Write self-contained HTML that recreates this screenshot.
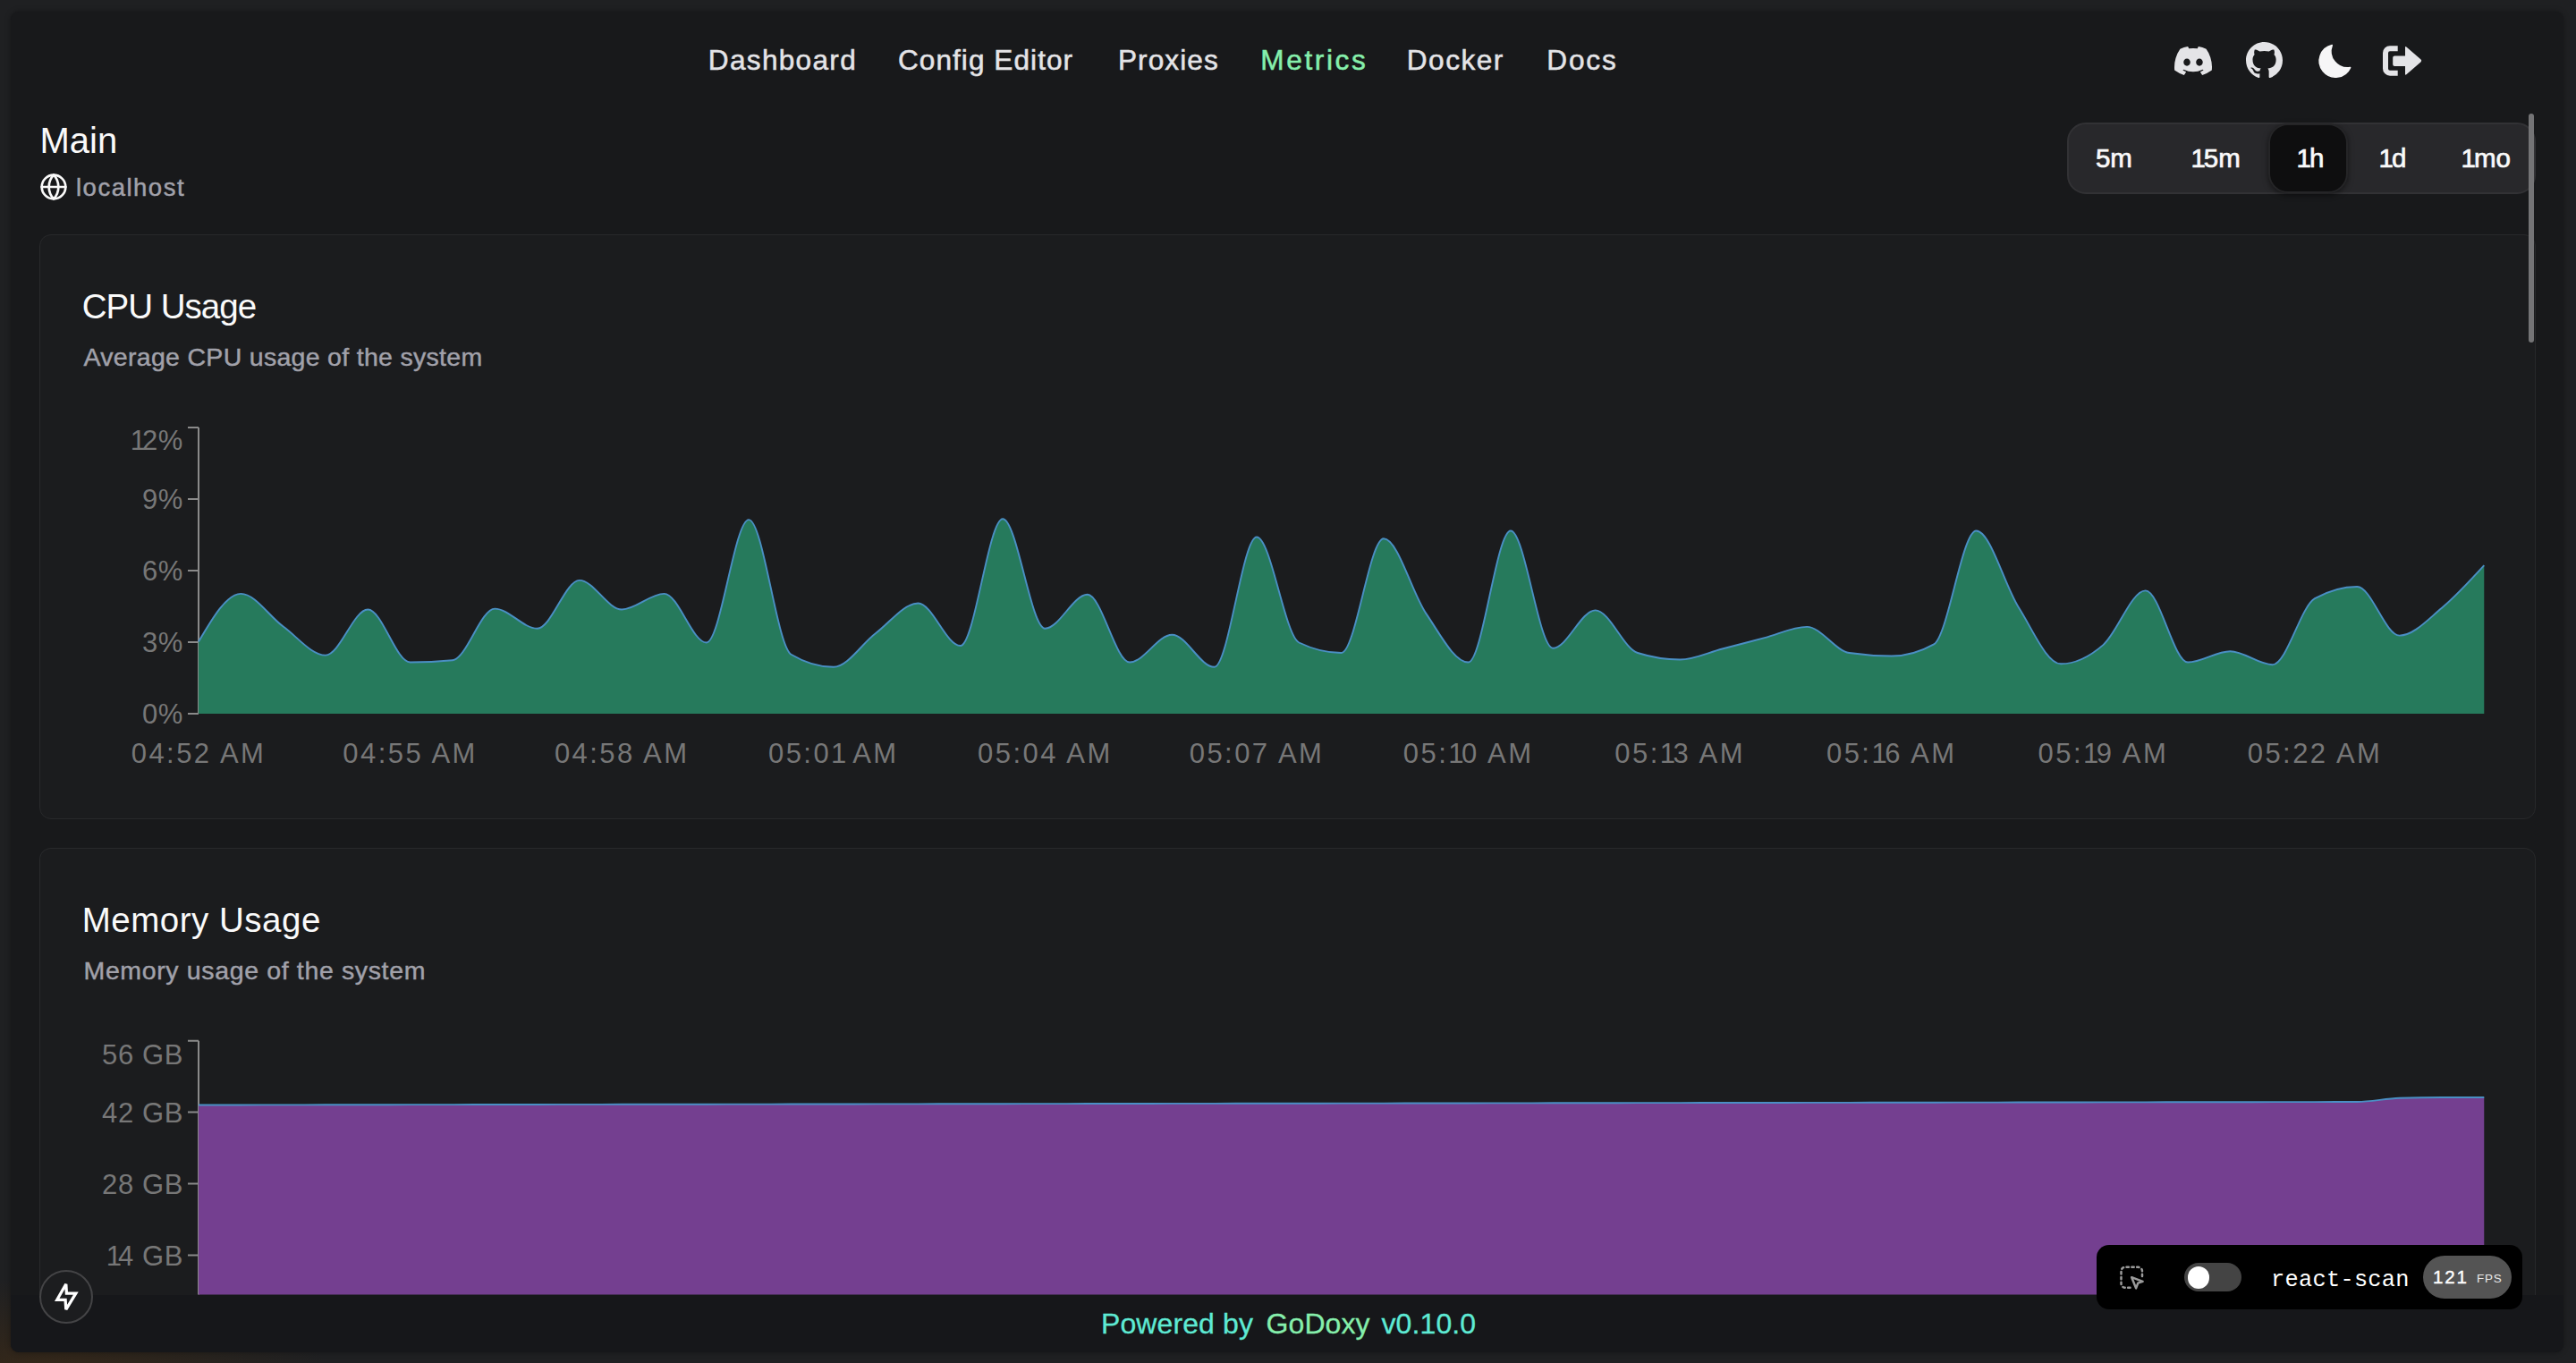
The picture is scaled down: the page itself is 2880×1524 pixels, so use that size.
<!DOCTYPE html>
<html><head><meta charset="utf-8">
<style>
*{box-sizing:border-box;margin:0;padding:0}
html,body{width:2880px;height:1524px;overflow:hidden;background:#1f2022;font-family:"Liberation Sans",sans-serif}
.wall{position:absolute;left:0;top:0;width:2880px;height:1524px;background:
 radial-gradient(ellipse 330px 110px at 40px 1540px, rgba(60,42,22,0.8), rgba(60,42,22,0) 100%),
 #1f2022}
.win{position:absolute;left:12px;top:13px;width:2854px;height:1499px;background:#18191b;border-radius:9px;box-shadow:0 0 6px rgba(0,0,0,0.35)}
.t{position:absolute;line-height:1;white-space:nowrap}
.card{position:absolute;left:44px;width:2791px;background:#1b1c1e;border:1px solid #28292b;border-radius:13px}
.yl{position:absolute;left:0;width:205px;text-align:right;font-size:31px;line-height:1;color:#777777;white-space:nowrap;letter-spacing:0.6px}
.xl{position:absolute;width:300px;text-align:center;font-size:31px;line-height:1;color:#777777;white-space:nowrap;letter-spacing:2.45px}
.chart{position:absolute;left:0;top:0}
.seg{position:absolute;left:2311px;top:137px;width:524px;height:80px;background:#28282b;border:2px solid #323235;border-radius:21px}
.segact{position:absolute;left:2536px;top:138px;width:89px;height:78px;background:#0e0e0f;border:2px solid #252527;border-radius:22px;box-shadow:0 2px 6px rgba(0,0,0,0.5)}
.sb{position:absolute;left:2827px;top:127px;width:6px;height:256px;background:#747476;border-radius:3px}
.foot{position:absolute;left:12px;top:1447.5px;width:2854px;height:64.5px;background:#16171a;border-radius:0 0 9px 9px}
.rs{position:absolute;left:2344px;top:1392px;width:476px;height:72px;background:#000;border-radius:14px}
.bolt{position:absolute;left:44px;top:1420px;width:60px;height:60px;border-radius:50%;border:2px solid #444446;background:#1c1d1f}
</style></head><body>
<div class="wall"></div>
<div class="win"></div>
<div class="card" style="top:262px;height:654px"></div>
<div class="card" style="top:948px;height:520px;border-bottom:none;border-radius:13px 13px 0 0"></div>
<svg class="chart" width="2880" height="1524" viewBox="0 0 2880 1524">
<defs><clipPath id="clipm"><rect x="0" y="0" width="2880" height="1447.5"/></clipPath></defs>
<g stroke="#8a8a8a" stroke-width="2" fill="none">
<path d="M222,478 V798"/>
<path d="M210,478 H222 M210,558 H222 M210,638 H222 M210,718 H222 M210,798 H222"/>
</g>
<path d="M222.00,717.60 C237.77,690.75 253.55,663.90 269.32,663.90 C285.09,663.90 300.87,689.05 316.64,700.50 C332.41,711.95 348.19,732.60 363.96,732.60 C379.73,732.60 395.51,681.50 411.28,681.50 C427.05,681.50 442.83,740.50 458.60,740.50 C474.37,740.50 490.15,739.73 505.92,738.20 C521.69,736.67 537.47,680.60 553.24,680.60 C569.01,680.60 584.79,702.70 600.56,702.70 C616.33,702.70 632.11,648.90 647.88,648.90 C663.65,648.90 679.43,681.50 695.20,681.50 C710.97,681.50 726.75,663.90 742.52,663.90 C758.29,663.90 774.07,718.50 789.84,718.50 C805.61,718.50 821.39,581.10 837.16,581.10 C852.93,581.10 868.71,722.30 884.48,731.70 C900.25,741.10 916.03,745.80 931.80,745.80 C947.57,745.80 963.35,719.88 979.12,708.00 C994.89,696.12 1010.67,674.50 1026.44,674.50 C1042.21,674.50 1057.99,722.00 1073.76,722.00 C1089.53,722.00 1105.31,580.30 1121.08,580.30 C1136.85,580.30 1152.63,702.70 1168.40,702.70 C1184.17,702.70 1199.95,664.80 1215.72,664.80 C1231.49,664.80 1247.27,740.50 1263.04,740.50 C1278.81,740.50 1294.59,709.70 1310.36,709.70 C1326.13,709.70 1341.91,745.80 1357.68,745.80 C1373.45,745.80 1389.23,600.50 1405.00,600.50 C1420.77,600.50 1436.55,710.83 1452.32,718.50 C1468.09,726.17 1483.87,730.00 1499.64,730.00 C1515.41,730.00 1531.19,602.30 1546.96,602.30 C1562.73,602.30 1578.51,662.87 1594.28,685.90 C1610.05,708.93 1625.83,740.50 1641.60,740.50 C1657.37,740.50 1673.15,593.50 1688.92,593.50 C1704.69,593.50 1720.47,724.70 1736.24,724.70 C1752.01,724.70 1767.79,682.40 1783.56,682.40 C1799.33,682.40 1815.11,725.00 1830.88,730.00 C1846.65,735.00 1862.43,737.50 1878.20,737.50 C1893.97,737.50 1909.75,729.55 1925.52,725.50 C1941.29,721.45 1957.07,717.30 1972.84,713.20 C1988.61,709.10 2004.39,700.90 2020.16,700.90 C2035.93,700.90 2051.71,727.67 2067.48,730.00 C2083.25,732.33 2099.03,733.50 2114.80,733.50 C2130.57,733.50 2146.35,729.10 2162.12,720.30 C2177.89,711.50 2193.67,593.50 2209.44,593.50 C2225.21,593.50 2240.99,654.20 2256.76,679.00 C2272.53,703.80 2288.31,742.30 2304.08,742.30 C2319.85,742.30 2335.63,734.75 2351.40,721.10 C2367.17,707.45 2382.95,660.40 2398.72,660.40 C2414.49,660.40 2430.27,740.50 2446.04,740.50 C2461.81,740.50 2477.59,728.20 2493.36,728.20 C2509.13,728.20 2524.91,743.20 2540.68,743.20 C2556.45,743.20 2572.23,678.00 2588.00,669.20 C2603.77,660.40 2619.55,656.00 2635.32,656.00 C2651.09,656.00 2666.87,710.60 2682.64,710.60 C2698.41,710.60 2714.19,692.87 2729.96,679.80 C2745.73,666.73 2761.51,649.47 2777.28,632.20 L2777.28,798.00 L222.00,798.00 Z" fill="#267a5c"/>
<path d="M222.00,717.60 C237.77,690.75 253.55,663.90 269.32,663.90 C285.09,663.90 300.87,689.05 316.64,700.50 C332.41,711.95 348.19,732.60 363.96,732.60 C379.73,732.60 395.51,681.50 411.28,681.50 C427.05,681.50 442.83,740.50 458.60,740.50 C474.37,740.50 490.15,739.73 505.92,738.20 C521.69,736.67 537.47,680.60 553.24,680.60 C569.01,680.60 584.79,702.70 600.56,702.70 C616.33,702.70 632.11,648.90 647.88,648.90 C663.65,648.90 679.43,681.50 695.20,681.50 C710.97,681.50 726.75,663.90 742.52,663.90 C758.29,663.90 774.07,718.50 789.84,718.50 C805.61,718.50 821.39,581.10 837.16,581.10 C852.93,581.10 868.71,722.30 884.48,731.70 C900.25,741.10 916.03,745.80 931.80,745.80 C947.57,745.80 963.35,719.88 979.12,708.00 C994.89,696.12 1010.67,674.50 1026.44,674.50 C1042.21,674.50 1057.99,722.00 1073.76,722.00 C1089.53,722.00 1105.31,580.30 1121.08,580.30 C1136.85,580.30 1152.63,702.70 1168.40,702.70 C1184.17,702.70 1199.95,664.80 1215.72,664.80 C1231.49,664.80 1247.27,740.50 1263.04,740.50 C1278.81,740.50 1294.59,709.70 1310.36,709.70 C1326.13,709.70 1341.91,745.80 1357.68,745.80 C1373.45,745.80 1389.23,600.50 1405.00,600.50 C1420.77,600.50 1436.55,710.83 1452.32,718.50 C1468.09,726.17 1483.87,730.00 1499.64,730.00 C1515.41,730.00 1531.19,602.30 1546.96,602.30 C1562.73,602.30 1578.51,662.87 1594.28,685.90 C1610.05,708.93 1625.83,740.50 1641.60,740.50 C1657.37,740.50 1673.15,593.50 1688.92,593.50 C1704.69,593.50 1720.47,724.70 1736.24,724.70 C1752.01,724.70 1767.79,682.40 1783.56,682.40 C1799.33,682.40 1815.11,725.00 1830.88,730.00 C1846.65,735.00 1862.43,737.50 1878.20,737.50 C1893.97,737.50 1909.75,729.55 1925.52,725.50 C1941.29,721.45 1957.07,717.30 1972.84,713.20 C1988.61,709.10 2004.39,700.90 2020.16,700.90 C2035.93,700.90 2051.71,727.67 2067.48,730.00 C2083.25,732.33 2099.03,733.50 2114.80,733.50 C2130.57,733.50 2146.35,729.10 2162.12,720.30 C2177.89,711.50 2193.67,593.50 2209.44,593.50 C2225.21,593.50 2240.99,654.20 2256.76,679.00 C2272.53,703.80 2288.31,742.30 2304.08,742.30 C2319.85,742.30 2335.63,734.75 2351.40,721.10 C2367.17,707.45 2382.95,660.40 2398.72,660.40 C2414.49,660.40 2430.27,740.50 2446.04,740.50 C2461.81,740.50 2477.59,728.20 2493.36,728.20 C2509.13,728.20 2524.91,743.20 2540.68,743.20 C2556.45,743.20 2572.23,678.00 2588.00,669.20 C2603.77,660.40 2619.55,656.00 2635.32,656.00 C2651.09,656.00 2666.87,710.60 2682.64,710.60 C2698.41,710.60 2714.19,692.87 2729.96,679.80 C2745.73,666.73 2761.51,649.47 2777.28,632.20" fill="none" stroke="#4a8fc4" stroke-width="1.9"/>
<g clip-path="url(#clipm)">
<g stroke="#8a8a8a" stroke-width="2" fill="none">
<path d="M222,1163.7 V1484"/>
<path d="M210,1163.7 H222 M210,1243.5 H222 M210,1323.5 H222 M210,1403.5 H222"/>
</g>
<path d="M222.00,1235.50 C237.77,1235.48 253.55,1235.45 269.32,1235.43 C285.09,1235.41 300.87,1235.39 316.64,1235.36 C332.41,1235.34 348.19,1235.32 363.96,1235.29 C379.73,1235.27 395.51,1235.25 411.28,1235.23 C427.05,1235.20 442.83,1235.18 458.60,1235.16 C474.37,1235.13 490.15,1235.11 505.92,1235.09 C521.69,1235.07 537.47,1235.04 553.24,1235.02 C569.01,1235.00 584.79,1234.97 600.56,1234.95 C616.33,1234.93 632.11,1234.91 647.88,1234.88 C663.65,1234.86 679.43,1234.84 695.20,1234.82 C710.97,1234.79 726.75,1234.77 742.52,1234.75 C758.29,1234.72 774.07,1234.70 789.84,1234.68 C805.61,1234.66 821.39,1234.63 837.16,1234.61 C852.93,1234.59 868.71,1234.56 884.48,1234.54 C900.25,1234.52 916.03,1234.50 931.80,1234.47 C947.57,1234.45 963.35,1234.43 979.12,1234.40 C994.89,1234.38 1010.67,1234.36 1026.44,1234.34 C1042.21,1234.31 1057.99,1234.29 1073.76,1234.27 C1089.53,1234.24 1105.31,1234.22 1121.08,1234.20 C1136.85,1234.18 1152.63,1234.15 1168.40,1234.13 C1184.17,1234.11 1199.95,1234.08 1215.72,1234.06 C1231.49,1234.04 1247.27,1234.02 1263.04,1233.99 C1278.81,1233.97 1294.59,1233.95 1310.36,1233.92 C1326.13,1233.90 1341.91,1233.88 1357.68,1233.86 C1373.45,1233.83 1389.23,1233.81 1405.00,1233.79 C1420.77,1233.76 1436.55,1233.74 1452.32,1233.72 C1468.09,1233.70 1483.87,1233.67 1499.64,1233.65 C1515.41,1233.63 1531.19,1233.60 1546.96,1233.58 C1562.73,1233.56 1578.51,1233.54 1594.28,1233.51 C1610.05,1233.49 1625.83,1233.47 1641.60,1233.45 C1657.37,1233.42 1673.15,1233.40 1688.92,1233.38 C1704.69,1233.35 1720.47,1233.33 1736.24,1233.31 C1752.01,1233.29 1767.79,1233.26 1783.56,1233.24 C1799.33,1233.22 1815.11,1233.19 1830.88,1233.17 C1846.65,1233.15 1862.43,1233.13 1878.20,1233.10 C1893.97,1233.08 1909.75,1233.06 1925.52,1233.03 C1941.29,1233.01 1957.07,1232.99 1972.84,1232.97 C1988.61,1232.94 2004.39,1232.92 2020.16,1232.90 C2035.93,1232.87 2051.71,1232.85 2067.48,1232.83 C2083.25,1232.81 2099.03,1232.78 2114.80,1232.76 C2130.57,1232.74 2146.35,1232.71 2162.12,1232.69 C2177.89,1232.67 2193.67,1232.65 2209.44,1232.62 C2225.21,1232.60 2240.99,1232.58 2256.76,1232.55 C2272.53,1232.53 2288.31,1232.51 2304.08,1232.49 C2319.85,1232.46 2335.63,1232.44 2351.40,1232.42 C2367.17,1232.39 2382.95,1232.37 2398.72,1232.35 C2414.49,1232.33 2430.27,1232.30 2446.04,1232.28 C2461.81,1232.26 2477.59,1232.24 2493.36,1232.21 C2509.13,1232.19 2524.91,1232.17 2540.68,1232.14 C2556.45,1232.12 2572.23,1232.10 2588.00,1232.08 C2603.77,1232.05 2619.55,1232.05 2635.32,1232.01 C2651.09,1231.96 2666.87,1228.23 2682.64,1227.74 C2698.41,1227.25 2714.19,1227.00 2729.96,1227.00 C2745.73,1227.00 2761.51,1227.00 2777.28,1227.00 L2777.28,1484.00 L222.00,1484.00 Z" fill="#743f90"/>
<path d="M222.00,1235.50 C237.77,1235.48 253.55,1235.45 269.32,1235.43 C285.09,1235.41 300.87,1235.39 316.64,1235.36 C332.41,1235.34 348.19,1235.32 363.96,1235.29 C379.73,1235.27 395.51,1235.25 411.28,1235.23 C427.05,1235.20 442.83,1235.18 458.60,1235.16 C474.37,1235.13 490.15,1235.11 505.92,1235.09 C521.69,1235.07 537.47,1235.04 553.24,1235.02 C569.01,1235.00 584.79,1234.97 600.56,1234.95 C616.33,1234.93 632.11,1234.91 647.88,1234.88 C663.65,1234.86 679.43,1234.84 695.20,1234.82 C710.97,1234.79 726.75,1234.77 742.52,1234.75 C758.29,1234.72 774.07,1234.70 789.84,1234.68 C805.61,1234.66 821.39,1234.63 837.16,1234.61 C852.93,1234.59 868.71,1234.56 884.48,1234.54 C900.25,1234.52 916.03,1234.50 931.80,1234.47 C947.57,1234.45 963.35,1234.43 979.12,1234.40 C994.89,1234.38 1010.67,1234.36 1026.44,1234.34 C1042.21,1234.31 1057.99,1234.29 1073.76,1234.27 C1089.53,1234.24 1105.31,1234.22 1121.08,1234.20 C1136.85,1234.18 1152.63,1234.15 1168.40,1234.13 C1184.17,1234.11 1199.95,1234.08 1215.72,1234.06 C1231.49,1234.04 1247.27,1234.02 1263.04,1233.99 C1278.81,1233.97 1294.59,1233.95 1310.36,1233.92 C1326.13,1233.90 1341.91,1233.88 1357.68,1233.86 C1373.45,1233.83 1389.23,1233.81 1405.00,1233.79 C1420.77,1233.76 1436.55,1233.74 1452.32,1233.72 C1468.09,1233.70 1483.87,1233.67 1499.64,1233.65 C1515.41,1233.63 1531.19,1233.60 1546.96,1233.58 C1562.73,1233.56 1578.51,1233.54 1594.28,1233.51 C1610.05,1233.49 1625.83,1233.47 1641.60,1233.45 C1657.37,1233.42 1673.15,1233.40 1688.92,1233.38 C1704.69,1233.35 1720.47,1233.33 1736.24,1233.31 C1752.01,1233.29 1767.79,1233.26 1783.56,1233.24 C1799.33,1233.22 1815.11,1233.19 1830.88,1233.17 C1846.65,1233.15 1862.43,1233.13 1878.20,1233.10 C1893.97,1233.08 1909.75,1233.06 1925.52,1233.03 C1941.29,1233.01 1957.07,1232.99 1972.84,1232.97 C1988.61,1232.94 2004.39,1232.92 2020.16,1232.90 C2035.93,1232.87 2051.71,1232.85 2067.48,1232.83 C2083.25,1232.81 2099.03,1232.78 2114.80,1232.76 C2130.57,1232.74 2146.35,1232.71 2162.12,1232.69 C2177.89,1232.67 2193.67,1232.65 2209.44,1232.62 C2225.21,1232.60 2240.99,1232.58 2256.76,1232.55 C2272.53,1232.53 2288.31,1232.51 2304.08,1232.49 C2319.85,1232.46 2335.63,1232.44 2351.40,1232.42 C2367.17,1232.39 2382.95,1232.37 2398.72,1232.35 C2414.49,1232.33 2430.27,1232.30 2446.04,1232.28 C2461.81,1232.26 2477.59,1232.24 2493.36,1232.21 C2509.13,1232.19 2524.91,1232.17 2540.68,1232.14 C2556.45,1232.12 2572.23,1232.10 2588.00,1232.08 C2603.77,1232.05 2619.55,1232.05 2635.32,1232.01 C2651.09,1231.96 2666.87,1228.23 2682.64,1227.74 C2698.41,1227.25 2714.19,1227.00 2729.96,1227.00 C2745.73,1227.00 2761.51,1227.00 2777.28,1227.00" fill="none" stroke="#4a8fc4" stroke-width="1.9"/>
</g>
</svg>
<div class="foot"></div>
<div class="t" style="left:791.8px;top:52.4px;font-size:31.60px;color:#e4e4e7;letter-spacing:1.30px;-webkit-text-stroke:0.5px #e4e4e7;">Dashboard</div>
<div class="t" style="left:1003.9px;top:52.4px;font-size:31.60px;color:#e4e4e7;letter-spacing:1.05px;-webkit-text-stroke:0.5px #e4e4e7;">Config Editor</div>
<div class="t" style="left:1249.9px;top:52.4px;font-size:31.60px;color:#e4e4e7;letter-spacing:1.10px;-webkit-text-stroke:0.5px #e4e4e7;">Proxies</div>
<div class="t" style="left:1409.3px;top:52.4px;font-size:31.60px;color:#86efac;letter-spacing:2.60px;-webkit-text-stroke:0.5px #86efac;">Metrics</div>
<div class="t" style="left:1572.8px;top:52.4px;font-size:31.60px;color:#e4e4e7;letter-spacing:1.50px;-webkit-text-stroke:0.5px #e4e4e7;">Docker</div>
<div class="t" style="left:1729.3px;top:52.4px;font-size:31.60px;color:#e4e4e7;letter-spacing:1.80px;-webkit-text-stroke:0.5px #e4e4e7;">Docs</div>
<div class="t" style="left:44.5px;top:136.9px;font-size:40.00px;color:#fafafa;">Main</div>
<div class="t" style="left:85.0px;top:195.5px;font-size:27.50px;color:#a1a1aa;letter-spacing:1.5px;-webkit-text-stroke:0.5px #a1a1aa;">localhost</div>
<div class="t" style="left:91.8px;top:323.9px;font-size:38.50px;color:#fafafa;letter-spacing:-1.0px;">CPU Usage</div>
<div class="t" style="left:93.5px;top:384.6px;font-size:28.50px;color:#a1a1aa;letter-spacing:0.3px;-webkit-text-stroke:0.45px #a1a1aa;">Average CPU usage of the system</div>
<div class="t" style="left:91.8px;top:1009.8px;font-size:38.50px;color:#fafafa;letter-spacing:0.5px;">Memory Usage</div>
<div class="t" style="left:93.5px;top:1070.5px;font-size:28.50px;color:#a1a1aa;letter-spacing:0.64px;-webkit-text-stroke:0.45px #a1a1aa;">Memory usage of the system</div>
<div class="yl" style="top:476.8px"><span style="letter-spacing:-4px">1</span>2%</div><div class="yl" style="top:543.2px">9%</div><div class="yl" style="top:623.2px">6%</div><div class="yl" style="top:703.2px">3%</div><div class="yl" style="top:783.2px">0%</div><div class="yl" style="top:1163.6px">56 GB</div><div class="yl" style="top:1228.5px">42 GB</div><div class="yl" style="top:1308.5px">28 GB</div><div class="yl" style="top:1388.5px"><span style="letter-spacing:-4px">1</span>4 GB</div>
<div class="xl" style="left:72.0px;top:826.6px">04:52 AM</div><div class="xl" style="left:308.6px;top:826.6px">04:55 AM</div><div class="xl" style="left:545.2px;top:826.6px">04:58 AM</div><div class="xl" style="left:781.8px;top:826.6px">05:0<span style="letter-spacing:-2.5px">1</span> AM</div><div class="xl" style="left:1018.4px;top:826.6px">05:04 AM</div><div class="xl" style="left:1255.0px;top:826.6px">05:07 AM</div><div class="xl" style="left:1491.6px;top:826.6px">05:<span style="letter-spacing:-2.5px">1</span>0 AM</div><div class="xl" style="left:1728.2px;top:826.6px">05:<span style="letter-spacing:-2.5px">1</span>3 AM</div><div class="xl" style="left:1964.8px;top:826.6px">05:<span style="letter-spacing:-2.5px">1</span>6 AM</div><div class="xl" style="left:2201.4px;top:826.6px">05:<span style="letter-spacing:-2.5px">1</span>9 AM</div><div class="xl" style="left:2438.0px;top:826.6px">05:22 AM</div>
<div class="t" style="left:1231.0px;top:1463.5px;font-size:32.00px;color:#5eead4;letter-spacing:0.1px;-webkit-text-stroke:0.3px #5eead4;">Powered by</div>
<div class="t" style="left:1415.5px;top:1463.5px;font-size:32.00px;color:#86efac;letter-spacing:0.1px;-webkit-text-stroke:0.3px #86efac;">GoDoxy</div>
<div class="t" style="left:1544.5px;top:1463.5px;font-size:32.00px;color:#5eead4;letter-spacing:0.1px;-webkit-text-stroke:0.3px #5eead4;">v0.10.0</div>
<div class="seg"></div><div class="segact"></div><div class="t" style="left:2342.9px;top:162.3px;font-size:29.50px;color:#fafafa;-webkit-text-stroke:0.7px #fafafa;letter-spacing:0px;">5m</div><div class="t" style="left:2449.4px;top:162.3px;font-size:29.50px;color:#fafafa;-webkit-text-stroke:0.7px #fafafa;letter-spacing:0px;"><span style="letter-spacing:-2px">1</span>5m</div><div class="t" style="left:2567.5px;top:162.3px;font-size:29.50px;color:#fafafa;-webkit-text-stroke:0.7px #fafafa;letter-spacing:0px;"><span style="letter-spacing:-2px">1</span>h</div><div class="t" style="left:2659.5px;top:162.3px;font-size:29.50px;color:#fafafa;-webkit-text-stroke:0.7px #fafafa;letter-spacing:0px;"><span style="letter-spacing:-2px">1</span>d</div><div class="t" style="left:2751.5px;top:162.3px;font-size:29.50px;color:#fafafa;-webkit-text-stroke:0.7px #fafafa;letter-spacing:0px;"><span style="letter-spacing:-2px">1</span>mo</div>
<div class="sb"></div>
<!-- globe -->
<svg style="position:absolute;left:44px;top:193px" width="32" height="32" viewBox="0 0 24 24" fill="none" stroke="#fafafa" stroke-width="2" stroke-linecap="round" stroke-linejoin="round"><circle cx="12" cy="12" r="10"/><path d="M12 2a14.5 14.5 0 0 0 0 20 14.5 14.5 0 0 0 0-20"/><path d="M2 12h20"/></svg>
<!-- discord -->
<svg style="position:absolute;left:2431px;top:52px" width="42" height="32" viewBox="0 0 127.14 96.36"><path fill="#e4e4e7" d="M107.7,8.07A105.15,105.15,0,0,0,81.47,0a72.06,72.06,0,0,0-3.36,6.83A97.68,97.68,0,0,0,49,6.83,72.37,72.37,0,0,0,45.64,0,105.89,105.89,0,0,0,19.39,8.09C2.79,32.65-1.71,56.6.54,80.21h0A105.73,105.73,0,0,0,32.71,96.36,77.7,77.7,0,0,0,39.6,85.25a68.42,68.42,0,0,1-10.85-5.18c.91-.66,1.8-1.34,2.66-2a75.57,75.57,0,0,0,64.32,0c.87.71,1.76,1.39,2.66,2a68.68,68.68,0,0,1-10.87,5.19,77,77,0,0,0,6.89,11.1A105.25,105.25,0,0,0,126.6,80.22h0C129.24,52.84,122.09,29.11,107.7,8.07ZM42.45,65.69C36.18,65.69,31,60,31,53s5-12.74,11.43-12.74S54,46,53.89,53,48.84,65.69,42.45,65.69Zm42.24,0C78.41,65.69,73.25,60,73.25,53s5-12.74,11.44-12.74S96.23,46,96.12,53,91.08,65.69,84.69,65.69Z"/></svg>
<!-- github -->
<svg style="position:absolute;left:2511px;top:47px" width="41" height="41" viewBox="0 0 16 16"><path fill="#e4e4e7" d="M8 0C3.58 0 0 3.58 0 8c0 3.54 2.29 6.53 5.47 7.59.4.07.55-.17.55-.38 0-.19-.01-.82-.01-1.49-2.01.37-2.53-.49-2.690-.94-.09-.23-.48-.94-.82-1.13-.28-.15-.68-.52-.01-.53.63-.01 1.08.58 1.23.82.72 1.21 1.87.87 2.33.66.07-.52.28-.87.51-1.07-1.78-.2-3.64-.89-3.64-3.95 0-.87.31-1.59.82-2.15-.08-.2-.36-1.02.08-2.12 0 0 .67-.21 2.2.82.64-.18 1.32-.27 2-.27.68 0 1.36.09 2 .27 1.53-1.04 2.2-.82 2.2-.82.44 1.1.16 1.92.08 2.12.51.56.82 1.27.82 2.15 0 3.07-1.87 3.75-3.65 3.95.29.25.54.73.54 1.48 0 1.07-.01 1.93-.01 2.2 0 .21.15.46.55.38A8.013 8.013 0 0016 8c0-4.42-3.58-8-8-8z"/></svg>
<!-- moon -->
<svg style="position:absolute;left:2585px;top:42px" width="50" height="50" viewBox="0 0 50 50"><path fill="#f6f6f7" stroke="#f6f6f7" stroke-width="1.6" stroke-linejoin="round" d="M22.2,8.6 A18.0,18.0 0 1 0 42.6,33.6 A18.6,18.6 0 0 1 22.2,8.6 Z"/></svg>
<!-- logout -->
<svg style="position:absolute;left:2655px;top:42px" width="60" height="50" viewBox="0 0 60 50"><path fill="#e4e4e7" d="M25.7,9.2 H17 A8,8 0 0 0 9,17.2 V34.7 A8,8 0 0 0 17,42.7 H25.7 V36.7 H17 A2,2 0 0 1 15,34.7 V17.2 A2,2 0 0 1 17,15.2 H25.7 Z"/><path fill="#e4e4e7" d="M22.2,20.4 H34 V11.2 Q34,9.4 35.4,10.6 L51.6,24.6 Q52.9,25.9 51.6,27.2 L35.4,41.3 Q34,42.5 34,40.8 V31.9 H22.2 Q20.2,31.9 20.2,29.9 V22.4 Q20.2,20.4 22.2,20.4 Z"/></svg>
<!-- bolt button -->
<div class="bolt"></div>
<svg style="position:absolute;left:50px;top:1425px" width="50" height="50" viewBox="0 0 50 50" fill="none" stroke="#fff" stroke-width="3.3" stroke-linejoin="miter" stroke-miterlimit="2.2"><path d="M23.8,10.8 L13.8,28.3 H23.1 L23.8,39.2 L34.8,21.2 H24.4 Z"/></svg>
<!-- react scan -->
<div class="rs"></div>
<svg style="position:absolute;left:2350px;top:1395px" width="60" height="65" viewBox="0 0 60 65" fill="none" stroke="#9b9b9b" stroke-width="2.5" stroke-linecap="round" stroke-linejoin="round"><path d="M31.5,44.8 H26 A4.5,4.5 0 0 1 21.5,40.3 V26.3 A4.5,4.5 0 0 1 26,21.8 H40.5 A4.5,4.5 0 0 1 45,26.3 V32" stroke-dasharray="2.4 3.4"/><path d="M33.2,33.2 L45.6,37.9 L40.3,39.6 L38.1,45.4 Z"/></svg>
<div style="position:absolute;left:2442px;top:1412px;width:64px;height:32px;border-radius:16px;background:#444"></div>
<div style="position:absolute;left:2445.5px;top:1416px;width:24.5px;height:24.5px;border-radius:50%;background:#fff"></div>
<div class="t" style="left:2539px;top:1418.5px;letter-spacing:0.3px;font-family:'Liberation Mono',monospace;font-size:25.3px;color:#fff">react-scan</div>
<div style="position:absolute;left:2709px;top:1404px;width:99px;height:48px;border-radius:24px;background:#545454"></div>
<div class="t" style="left:2720px;top:1418.1px;font-size:20.5px;color:#fff;-webkit-text-stroke:0.4px #fff;letter-spacing:1.8px">121</div>
<div class="t" style="left:2769px;top:1423.4px;font-size:13.5px;color:#e8e8e8;letter-spacing:0.8px">FPS</div>
</body></html>
